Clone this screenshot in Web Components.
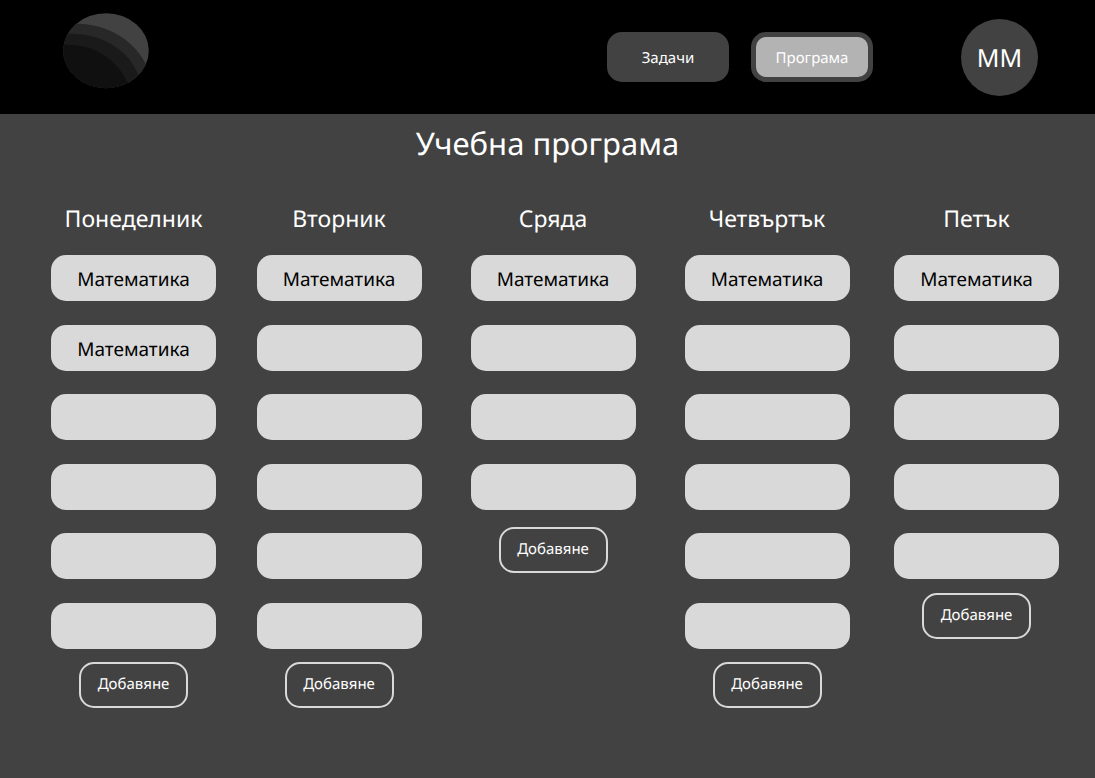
<!DOCTYPE html>
<html lang="bg">
<head>
<meta charset="utf-8">
<meta name="viewport" content="width=device-width, initial-scale=1">
<title>Учебна програма</title>
<style>
  body {
    margin: 0;
    min-height: 100vh;
    background: #424242;
    color: #fff;
    font-family: "Noto Sans", "Open Sans", sans-serif;
    text-rendering: geometricPrecision;
  }
</style>
</head>
<body>
<site-header initials="ММ">
  <nav-link href="#tasks">Задачи</nav-link>
  <nav-link href="#program" current>Програма</nav-link>
</site-header>
<week-program heading="Учебна програма">
  <day-column name="Понеделник" slots="6" subjects="Математика,Математика"></day-column>
  <day-column name="Вторник" slots="6" subjects="Математика"></day-column>
  <day-column name="Сряда" slots="4" subjects="Математика"></day-column>
  <day-column name="Четвъртък" slots="6" subjects="Математика"></day-column>
  <day-column name="Петък" slots="5" subjects="Математика"></day-column>
</week-program>

<script>
class BaseElement extends HTMLElement {
  render(html) {
    this.attachShadow({ mode: "open" }).innerHTML = html;
  }
}

class SiteLogo extends BaseElement {
  connectedCallback() {
    this.render(`
      <style>
        :host { display: block; }
        svg { display: block; width: 86px; height: 76px; }
      </style>
      <svg viewBox="0 0 86 76" role="img" aria-label="Лого">
        <defs><clipPath id="disc"><ellipse cx="43" cy="37.7" rx="42.8" ry="37.5"/></clipPath></defs>
        <g clip-path="url(#disc)">
          <rect width="86" height="76" fill="#424242"/>
          <path d="M0 11 C38 7 72 24 85 56 L85 76 H0Z" fill="#282828"/>
          <path d="M0 21 C34 18 66 34 77 66 L77 76 H0Z" fill="#1a1a1a"/>
          <path d="M0 32 C28 30 56 45 67 76 H0Z" fill="#101010"/>
        </g>
      </svg>`);
  }
}

class NavLink extends BaseElement {
  connectedCallback() {
    this.render(`
      <style>
        :host { display: block; }
        a {
          box-sizing: border-box;
          display: flex;
          align-items: center;
          justify-content: center;
          width: 122px;
          height: 50px;
          padding-top: 2px;
          border: 5px solid #424242;
          border-radius: 15px;
          background: #424242;
          color: #fff;
          font-size: 15px;
          line-height: 20px;
          text-decoration: none;
        }
        :host([current]) a { background: #b3b3b3; }
      </style>
      <a href="${this.getAttribute("href")}"${this.hasAttribute("current") ? ' aria-current="page"' : ""}><slot></slot></a>`);
  }
}

class UserAvatar extends BaseElement {
  connectedCallback() {
    this.render(`
      <style>
        :host {
          box-sizing: border-box;
          display: grid;
          place-items: center;
          width: 77px;
          height: 77px;
          padding-top: 2px;
          border-radius: 50%;
          background: #424242;
          font-size: 25px;
          line-height: 34px;
        }
      </style>
      <span><slot></slot></span>`);
  }
}

class SiteHeader extends BaseElement {
  connectedCallback() {
    this.render(`
      <style>
        :host { display: block; background: #000; }
        header {
          box-sizing: border-box;
          display: flex;
          align-items: center;
          min-height: 114px;
          padding: 13px 57px 13px 63px;
        }
        site-logo { align-self: flex-start; }
        nav { display: flex; gap: 22px; margin: 0 88px 0 auto; }
      </style>
      <header>
        <site-logo></site-logo>
        <nav><slot></slot></nav>
        <user-avatar>${this.getAttribute("initials")}</user-avatar>
      </header>`);
  }
}

class DayColumn extends BaseElement {
  connectedCallback() {
    const subjects = this.getAttribute("subjects").split(",");
    const count = Number(this.getAttribute("slots"));
    const items = Array.from({ length: count }, (_, i) => `<li>${subjects[i] || ""}</li>`).join("");
    this.render(`
      <style>
        :host { display: flex; flex-direction: column; align-items: center; }
        h2 { margin: 0 0 21px; font-size: 23px; font-weight: 400; line-height: 32px; }
        ul { margin: 0; padding: 0; list-style: none; }
        li {
          box-sizing: border-box;
          display: flex;
          align-items: center;
          justify-content: center;
          width: 165px;
          height: 46px;
          padding-top: 2px;
          border-radius: 15px;
          background: #d9d9d9;
          color: #000;
          font-size: 19px;
          line-height: 26px;
        }
        li + li { margin-top: 23px; }
        li:nth-child(even) { margin-top: 24px; }
        button {
          width: 109px;
          height: 46px;
          margin: var(--add-gap, 13px) 0 0;
          padding: 0 0 2px;
          border: 2px solid #d9d9d9;
          border-radius: 15px;
          background: none;
          color: #fff;
          font: 15px/20px "Noto Sans", "Open Sans", sans-serif;
          text-rendering: inherit;
        }
      </style>
      <h2>${this.getAttribute("name")}</h2>
      <ul>${items}</ul>
      <button type="button">Добавяне</button>`);
  }
}

class WeekProgram extends BaseElement {
  connectedCallback() {
    this.render(`
      <style>
        :host { display: block; }
        h1 { margin: 0; padding: 9px 0 37px; font-size: 31px; font-weight: 400; line-height: 42px; text-align: center; }
        .days {
          display: grid;
          grid-template-columns: 205fr 206fr 222fr 206fr 213fr;
          padding: 0 12px 48px 31px;
        }
        ::slotted([slots="4"]) { --add-gap: 17px; }
        ::slotted([slots="5"]) { --add-gap: 14px; }
      </style>
      <main>
        <h1>${this.getAttribute("heading")}</h1>
        <div class="days"><slot></slot></div>
      </main>`);
  }
}

customElements.define("site-logo", SiteLogo);
customElements.define("nav-link", NavLink);
customElements.define("user-avatar", UserAvatar);
customElements.define("site-header", SiteHeader);
customElements.define("day-column", DayColumn);
customElements.define("week-program", WeekProgram);
</script>
</body>
</html>
